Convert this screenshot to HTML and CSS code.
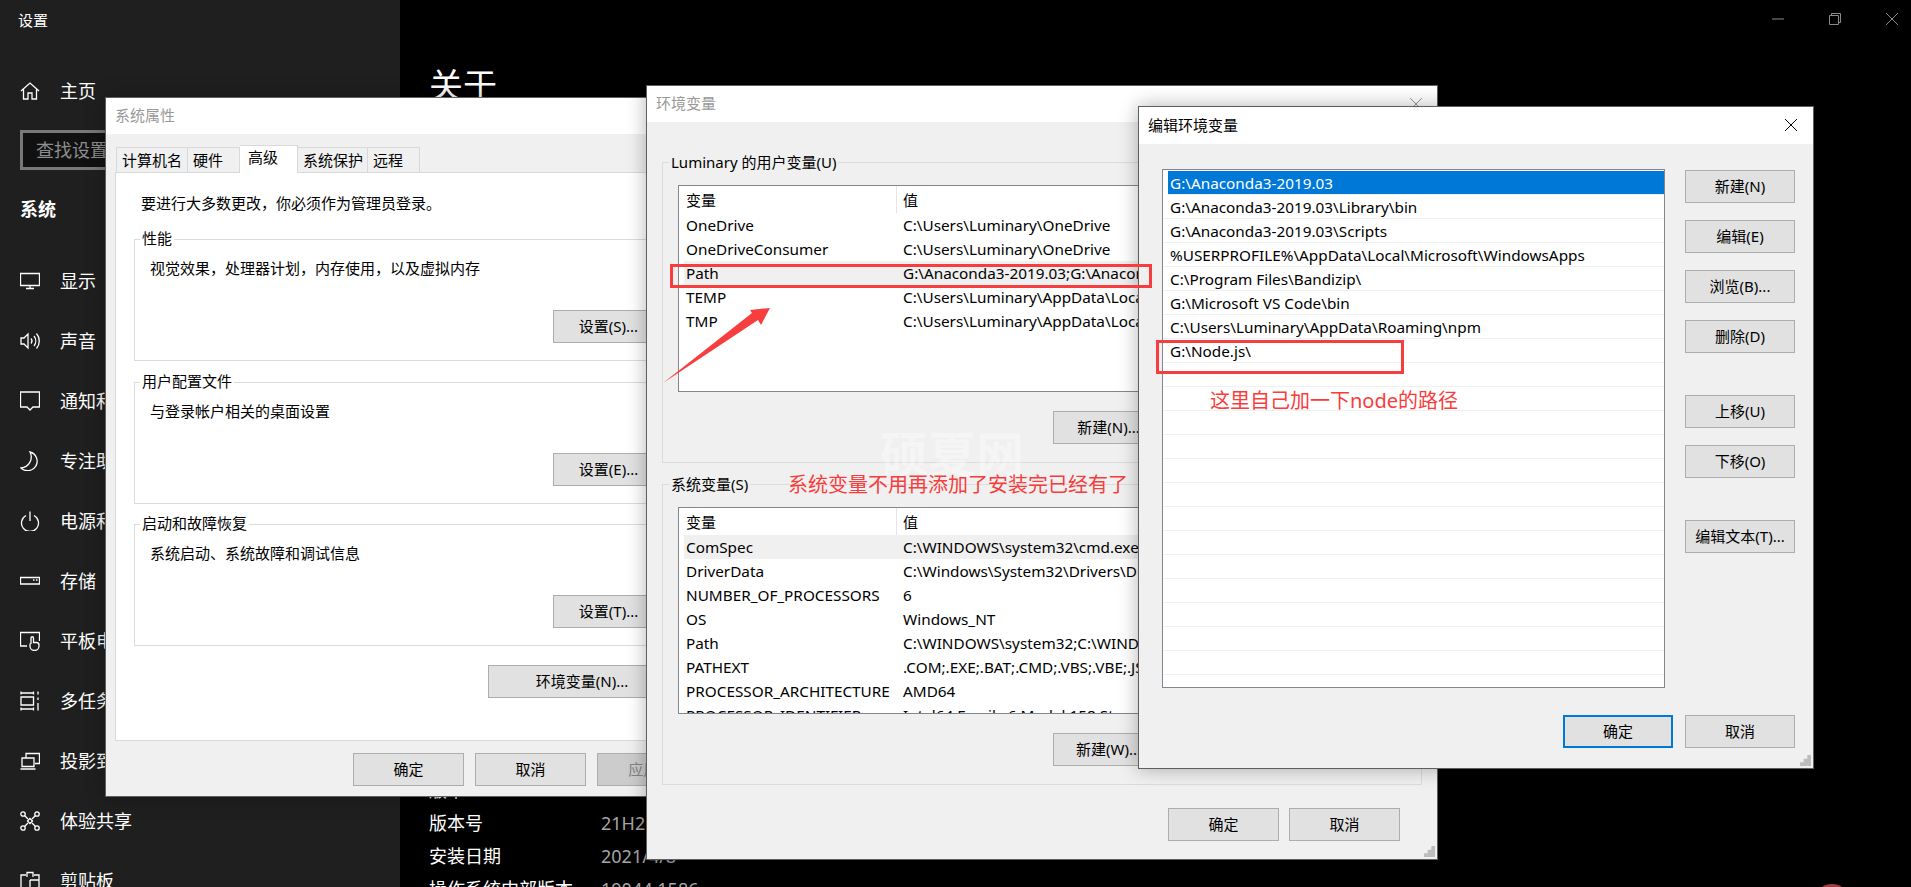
FILE: index.html
```html
<!DOCTYPE html>
<html lang="zh-CN">
<head>
    <meta charset="UTF-8">
    <title>设置</title>
    <link rel="stylesheet" href="styles.css">
</head>
<body>

<div class="settings">
    <div class="sidebar">
        <div class="app-title">设置</div>
        <div class="nav-item nav-home">
            <svg class="nav-icon" viewBox="0 0 20 20"><path d="M1 10L10 2L19 10M3.5 8V18H8V12H12V18H16.5V8"/></svg>
            <span>主页</span>
        </div>
        <div class="search-box">查找设置</div>
        <div class="nav-group">系统</div>
        <div class="nav-item">
            <svg class="nav-icon" viewBox="0 0 20 20"><path d="M.5 2.500H19.500V14.500H.5ZM10 14.500V17.500M6 17.500H14"/></svg>
            <span>显示</span>
        </div>
        <div class="nav-item">
            <svg class="nav-icon" viewBox="0 0 20 20"><path d="M1 7H4L8 3V17L4 13H1ZM11 7.500A4 4 0 0 1 11 12.500M14 5A8 8 0 0 1 14 15M16.500 2.500A11.500 11.500 0 0 1 16.500 17.500"/></svg>
            <span>声音</span>
        </div>
        <div class="nav-item">
            <svg class="nav-icon" viewBox="0 0 20 20"><path d="M.5 1H19.500V16H13L10 19L7 16H.5Z"/></svg>
            <span>通知和操作</span>
        </div>
        <div class="nav-item">
            <svg class="nav-icon" viewBox="0 0 20 20"><path d="M10 1A9.500 9.500 0 1 1 1 17A11 11 0 0 0 10 1Z"/></svg>
            <span>专注助手</span>
        </div>
        <div class="nav-item">
            <svg class="nav-icon" viewBox="0 0 20 20"><path d="M6 4.500A8.500 8.500 0 1 0 14 4.500M10 .5V10"/></svg>
            <span>电源和睡眠</span>
        </div>
        <div class="nav-item">
            <svg class="nav-icon" viewBox="0 0 20 20"><path d="M.5 6.500H19.500V13H.5ZM13 9H14.500M16 9H17.500"/></svg>
            <span>存储</span>
        </div>
        <div class="nav-item">
            <svg class="nav-icon" viewBox="0 0 20 20"><path d="M7 15H.5V1.500H19.500V10M11 13V7A1.200 1.200 0 0 1 13.500 7V11.500H16.500A2.500 2.500 0 0 1 19 14V15A4.500 4.500 0 0 1 10 15V12.500"/></svg>
            <span>平板电脑</span>
        </div>
        <div class="nav-item">
            <svg class="nav-icon" viewBox="0 0 20 20"><path d="M1 .5V3.500M13.500 .5V3.500M1 2H13.500M1 6H13.500V14H1ZM1 18H13.500M1 16.500V19.500M13.500 16.500V19.500M18 .5V3.500M18 6.500V9M18 12V19.500"/></svg>
            <span>多任务处理</span>
        </div>
        <div class="nav-item">
            <svg class="nav-icon" viewBox="0 0 20 20"><path d="M6 7V2.500H19.500V12.500H15M2 7H14V15.500H2ZM.5 18H15.500"/></svg>
            <span>投影到此电脑</span>
        </div>
        <div class="nav-item">
            <svg class="nav-icon" viewBox="0 0 20 20"><path d="M4.500 4.500L8 8M15.500 4.500L12 8M4.500 15.500L8 12M15.500 15.500L12 12M10 7.500L12.500 10L10 12.500L7.500 10Z"/><circle cx="3" cy="3" r="2.200"/><circle cx="17" cy="3" r="2.200"/><circle cx="3" cy="17" r="2.200"/><circle cx="17" cy="17" r="2.200"/></svg>
            <span>体验共享</span>
        </div>
        <div class="nav-item">
            <svg class="nav-icon" viewBox="0 0 20 20"><path d="M6 4H1V20H19V4H14M7 6V1.500H13V6M10 9H19M10 9V20"/></svg>
            <span>剪贴板</span>
        </div>
    </div>

    <div class="main">
        <h1 class="page-title">关于</h1>
        <div class="spec-list">
            <div class="spec-row"><span class="spec-key">版本</span><span class="spec-value">Windows 10 家庭版</span></div>
            <div class="spec-row"><span class="spec-key">版本号</span><span class="spec-value">21H2</span></div>
            <div class="spec-row"><span class="spec-key">安装日期</span><span class="spec-value">2021/4/8</span></div>
            <div class="spec-row"><span class="spec-key">操作系统内部版本</span><span class="spec-value">19044.1586</span></div>
        </div>
        <div class="window-controls">
            <div class="control"><svg viewBox="0 0 12 12"><path d="M0 6H12"/></svg></div>
            <div class="control"><svg viewBox="0 0 12 12"><path d="M.5 2.500H9.500V11.500H.5ZM2.500 2.500V.5H11.500V9.500H9.500"/></svg></div>
            <div class="control"><svg viewBox="0 0 12 12"><path d="M0 0L12 12M12 0L0 12"/></svg></div>
        </div>
    </div>
</div>

<!-- 系统属性 -->
<div class="window window-system">
    <div class="title-bar">系统属性</div>
    <div class="tabs">
        <div class="tab">计算机名</div>
        <div class="tab">硬件</div>
        <div class="tab active">高级</div>
        <div class="tab">系统保护</div>
        <div class="tab">远程</div>
    </div>
    <div class="tab-panel">
        <p class="admin-note">要进行大多数更改，你必须作为管理员登录。</p>
        <fieldset class="group">
            <legend>性能</legend>
            <p class="group-text">视觉效果，处理器计划，内存使用，以及虚拟内存</p>
            <button class="btn btn-end">设置(S)...</button>
        </fieldset>
        <fieldset class="group">
            <legend>用户配置文件</legend>
            <p class="group-text">与登录帐户相关的桌面设置</p>
            <button class="btn btn-end">设置(E)...</button>
        </fieldset>
        <fieldset class="group">
            <legend>启动和故障恢复</legend>
            <p class="group-text">系统启动、系统故障和调试信息</p>
            <button class="btn btn-end">设置(T)...</button>
        </fieldset>
        <div class="env-row"><button class="btn btn-env">环境变量(N)...</button></div>
    </div>
    <div class="dialog-buttons dialog-buttons-system">
        <button class="btn">确定</button>
        <button class="btn">取消</button>
        <button class="btn disabled">应用(A)</button>
    </div>
</div>

<!-- 环境变量 -->
<div class="window window-env">
    <div class="title-bar">
        环境变量
        <svg class="close-icon" viewBox="0 0 12 12"><path d="M0 0L12 12M12 0L0 12"/></svg>
    </div>
    <div class="env-body">
        <fieldset class="var-group">
            <legend>Luminary 的用户变量(U)</legend>
            <div class="var-list">
                <div class="var-head"><span class="var-name">变量</span><span class="var-value">值</span></div>
                <div class="var-row"><span class="var-name">OneDrive</span><span class="var-value">C:\Users\Luminary\OneDrive</span></div>
                <div class="var-row"><span class="var-name">OneDriveConsumer</span><span class="var-value">C:\Users\Luminary\OneDrive</span></div>
                <div class="var-row current"><span class="var-name">Path</span><span class="var-value">G:\Anaconda3-2019.03;G:\Anaconda3-2019.03\Library\bin</span></div>
                <div class="var-row"><span class="var-name">TEMP</span><span class="var-value">C:\Users\Luminary\AppData\Local\Temp</span></div>
                <div class="var-row"><span class="var-name">TMP</span><span class="var-value">C:\Users\Luminary\AppData\Local\Temp</span></div>
            </div>
            <div class="var-actions">
                <button class="btn">新建(N)...</button>
                <button class="btn">编辑(E)...</button>
                <button class="btn">删除(D)</button>
            </div>
        </fieldset>
        <fieldset class="var-group">
            <legend>系统变量(S)</legend>
            <div class="var-list">
                <div class="var-head"><span class="var-name">变量</span><span class="var-value">值</span></div>
                <div class="var-row current"><span class="var-name">ComSpec</span><span class="var-value">C:\WINDOWS\system32\cmd.exe</span></div>
                <div class="var-row"><span class="var-name">DriverData</span><span class="var-value">C:\Windows\System32\Drivers\DriverData</span></div>
                <div class="var-row"><span class="var-name">NUMBER_OF_PROCESSORS</span><span class="var-value">6</span></div>
                <div class="var-row"><span class="var-name">OS</span><span class="var-value">Windows_NT</span></div>
                <div class="var-row"><span class="var-name">Path</span><span class="var-value">C:\WINDOWS\system32;C:\WINDOWS;C:\WINDOWS\System32\Wbem</span></div>
                <div class="var-row"><span class="var-name">PATHEXT</span><span class="var-value">.COM;.EXE;.BAT;.CMD;.VBS;.VBE;.JS;.JSE</span></div>
                <div class="var-row"><span class="var-name">PROCESSOR_ARCHITECTURE</span><span class="var-value">AMD64</span></div>
                <div class="var-row"><span class="var-name">PROCESSOR_IDENTIFIER</span><span class="var-value">Intel64 Family 6 Model 158 Stepping 10</span></div>
            </div>
            <div class="var-actions">
                <button class="btn">新建(W)...</button>
                <button class="btn">编辑(I)...</button>
                <button class="btn">删除(L)</button>
            </div>
        </fieldset>
        <div class="dialog-buttons dialog-buttons-env">
            <button class="btn">确定</button>
            <button class="btn">取消</button>
        </div>
    </div>
    <svg class="grip" viewBox="0 0 12 12"><path d="M8 0H12V4H8ZM4 4H8V8H4ZM8 4H12V8H8ZM0 8H4V12H0ZM4 8H8V12H4ZM8 8H12V12H8Z"/></svg>
</div>

<div class="watermark">硕夏网</div>

<!-- 编辑环境变量 -->
<div class="window window-edit">
    <div class="title-bar">
        编辑环境变量
        <svg class="close-icon" viewBox="0 0 12 12"><path d="M0 0L12 12M12 0L0 12"/></svg>
    </div>
    <div class="edit-body">
        <div class="path-list">
            <div class="path-row selected">G:\Anaconda3-2019.03</div>
            <div class="path-row">G:\Anaconda3-2019.03\Library\bin</div>
            <div class="path-row">G:\Anaconda3-2019.03\Scripts</div>
            <div class="path-row">%USERPROFILE%\AppData\Local\Microsoft\WindowsApps</div>
            <div class="path-row">C:\Program Files\Bandizip\</div>
            <div class="path-row">G:\Microsoft VS Code\bin</div>
            <div class="path-row">C:\Users\Luminary\AppData\Roaming\npm</div>
            <div class="path-row">G:\Node.js\</div>
            <div class="path-row"></div>
            <div class="path-row"></div>
            <div class="path-row"></div>
            <div class="path-row"></div>
            <div class="path-row"></div>
            <div class="path-row"></div>
            <div class="path-row"></div>
            <div class="path-row"></div>
            <div class="path-row"></div>
            <div class="path-row"></div>
            <div class="path-row"></div>
            <div class="path-row"></div>
            <div class="path-row"></div>
        </div>
        <div class="edit-actions">
            <button class="btn">新建(N)</button>
            <button class="btn">编辑(E)</button>
            <button class="btn">浏览(B)...</button>
            <button class="btn">删除(D)</button>
            <button class="btn action-gap">上移(U)</button>
            <button class="btn">下移(O)</button>
            <button class="btn action-gap">编辑文本(T)...</button>
        </div>
    </div>
    <div class="dialog-buttons dialog-buttons-edit">
        <button class="btn btn-default">确定</button>
        <button class="btn">取消</button>
    </div>
    <svg class="grip" viewBox="0 0 12 12"><path d="M8 0H12V4H8ZM4 4H8V8H4ZM8 4H12V8H8ZM0 8H4V12H0ZM4 8H8V12H4ZM8 8H12V12H8Z"/></svg>
</div>

<!-- 红色标注 -->
<div class="mark mark-path"></div>
<div class="mark mark-node"></div>
<svg class="arrow" viewBox="0 0 120 90"><path d="M3 85L92 15L90 12L110 10L101 27L98 22Z"/></svg>
<div class="note note-system">系统变量不用再添加了安装完已经有了</div>
<div class="note note-node">这里自己加一下node的路径</div>

<div class="tray-dot"></div>

</body>
</html>
```

FILE: styles.css
```css
* {
    margin: 0;
    padding: 0;
    box-sizing: border-box;
}

body {
    width: 1911px;
    height: 887px;
    overflow: hidden;
    position: relative;
    background-color: #000;
    font-family: "Noto Sans", "Noto Sans CJK SC", sans-serif;
    font-size: 15px;
    line-height: 22px;
    color: #000;
}

/* settings app behind the dialogs */
.settings {
    display: flex;
    height: 100%;
}

.sidebar {
    width: 400px;
    flex: none;
    background-color: #1f1f1f;
    color: #fff;
    font-size: 18px;
    line-height: 24px;
    padding-top: 8px;
}

.app-title {
    font-size: 15px;
    padding-left: 18px;
    margin-bottom: 35px;
}

.nav-item {
    display: flex;
    align-items: center;
    height: 60px;
    padding-left: 20px;
    white-space: nowrap;
}

.nav-home {
    height: 48px;
}

.nav-icon {
    width: 20px;
    height: 20px;
    flex: none;
    margin-right: 20px;
    fill: none;
    stroke: #fff;
    stroke-width: 1.3;
}

.search-box {
    margin: 15px 20px 0;
    height: 40px;
    border: 3px solid #787878;
    background-color: #111;
    color: #8e8e8e;
    padding: 5px 13px;
}

.nav-group {
    font-weight: 700;
    padding-left: 20px;
    margin: 27px 0 30px;
}

.main {
    flex: 1;
    position: relative;
    color: #fff;
    padding: 60px 0 0 29px;
}

.page-title {
    font-size: 34px;
    font-weight: 400;
    line-height: 50px;
    margin-bottom: 664px;
}

.spec-row {
    display: flex;
    height: 33px;
    font-size: 18px;
    line-height: 33px;
    white-space: nowrap;
}

.spec-key {
    width: 172px;
}

.spec-value {
    color: #a6a6a6;
}

.window-controls {
    position: absolute;
    top: 0;
    right: -9px;
    display: flex;
}

.control {
    width: 57px;
    height: 38px;
    display: flex;
    align-items: center;
    justify-content: center;
}

.control svg {
    width: 12px;
    height: 12px;
    fill: none;
    stroke: #8a8a8a;
}

/* dialogs sit on the desktop at their own place */
.window {
    position: absolute;
    background-color: #f0f0f0;
    border: 1px solid #5f5f5f;
    box-shadow: 0 0 18px rgba(0, 0, 0, 0.3);
}

.window-system {
    left: 105px;
    top: 97px;
    width: 620px;
    height: 700px;
}

.window-env {
    left: 646px;
    top: 85px;
    width: 792px;
    height: 775px;
}

.window-edit {
    left: 1138px;
    top: 106px;
    width: 676px;
    height: 663px;
}

.title-bar {
    position: relative;
    height: 36px;
    background-color: #fff;
    color: #999;
    line-height: 34px;
    padding-left: 9px;
}

.window-edit .title-bar {
    height: 37px;
    line-height: 37px;
    color: #000;
}

.close-icon {
    position: absolute;
    top: 12px;
    right: 15px;
    width: 12px;
    height: 12px;
    fill: none;
    stroke: #999;
}

.window-edit .close-icon {
    stroke: #000;
    right: 16px;
}

.grip {
    position: absolute;
    right: 2px;
    bottom: 2px;
    width: 11px;
    height: 11px;
    fill: #bdbdbd;
}

.btn {
    display: block;
    width: 111px;
    height: 33px;
    flex: none;
    padding-bottom: 2px;
    background-color: #e1e1e1;
    border: 1px solid #adadad;
    font: inherit;
    color: #000;
}

.btn.disabled {
    background-color: #ccc;
    color: #838383;
}

.btn-default {
    border: 2px solid #0078d7;
}

.dialog-buttons {
    display: flex;
}

/* system properties */
.tabs {
    display: flex;
    align-items: flex-end;
    height: 38px;
    padding-left: 10px;
}

.tab {
    height: 25px;
    padding-left: 5px;
    line-height: 25px;
    background-color: #f0f0f0;
    border: 1px solid #d9d9d9;
    border-bottom: 0;
    border-left: 0;
    white-space: nowrap;
}

.tab:nth-child(1) { width: 72px; border-left: 1px solid #d9d9d9; }
.tab:nth-child(2) { width: 52px; }
.tab:nth-child(3) { width: 58px; }
.tab:nth-child(4) { width: 70px; }
.tab:nth-child(5) { width: 52px; }

.tab.active {
    position: relative;
    height: 28px;
    margin-bottom: -1px;
    padding-left: 8px;
    line-height: 23px;
    background-color: #fff;
}

.tab-panel {
    margin-left: 9px;
    height: 569px;
    background-color: #fff;
    border: 1px solid #d9d9d9;
    padding: 19px 0 0 18px;
}

.admin-note {
    padding-left: 7px;
    margin-bottom: 14px;
}

.group {
    width: 546px;
    height: 133px;
    margin-bottom: 10px;
    border: 1px solid #dcdcdc;
    padding: 7px 15px 0;
}

.group + .group + .group {
    margin-top: -1px;
}

.group legend {
    margin-left: -10px;
    padding: 0 2px 2px;
    line-height: 20px;
}

.var-group legend {
    margin-left: -9px;
    padding: 0 2px;
}

.group-text {
    margin-bottom: 31px;
}

.btn-end {
    margin-left: auto;
}

.env-row {
    width: 542px;
    padding-top: 9px;
}

.btn-env {
    width: 188px;
    margin-left: auto;
}

.dialog-buttons-system {
    gap: 11px;
    padding: 12px 0 0 247px;
}

/* environment variables */
.env-body {
    padding-left: 15px;
    position: relative;
}

.var-group {
    width: 760px;
    height: 312px;
    margin-bottom: 10px;
    border: 1px solid #dcdcdc;
    padding: 12px 15px 0;
}

.var-group:first-child {
    margin-top: 29px;
}

.var-list {
    height: 207px;
    overflow: hidden;
    background-color: #fff;
    border: 1px solid #82878f;
}

.var-head,
.var-row {
    display: flex;
    white-space: nowrap;
    margin-left: 5px;
    padding-left: 2px;
}

.var-head {
    height: 27px;
    line-height: 28px;
}

.var-row {
    height: 24px;
    font-size: 15.3px;
    line-height: 24px;
}

.var-row.current {
    background-color: #f0f0f0;
}

.var-name {
    width: 210px;
    flex: none;
}

.var-value {
    padding-left: 7px;
}

.var-head .var-value {
    border-left: 1px solid #e5e5e5;
    padding-left: 6px;
}

.var-actions {
    display: flex;
    justify-content: flex-end;
    gap: 10px;
    margin-top: 19px;
}

.dialog-buttons-env {
    width: 738px;
    justify-content: flex-end;
    gap: 10px;
    padding-top: 13px;
}

/* edit dialog */
.edit-body {
    display: flex;
    padding: 25px 0 0 23px;
}

.path-list {
    width: 503px;
    height: 519px;
    overflow: hidden;
    background-color: #fff;
    border: 1px solid #82878f;
    padding-top: 1px;
    margin-right: 20px;
}

.path-row {
    height: 24px;
    padding-left: 7px;
    font-size: 15.3px;
    line-height: 24px;
    border-bottom: 1px solid #f0f0f0;
    white-space: nowrap;
}

.path-row.selected {
    margin-left: 5px;
    padding-left: 2px;
    background-color: #0078d7;
    color: #fff;
}

.edit-actions {
    display: flex;
    flex-direction: column;
    gap: 17px;
    padding-top: 1px;
}

.edit-actions .btn {
    width: 110px;
}

.edit-actions .action-gap {
    margin-top: 25px;
}

.dialog-buttons-edit {
    justify-content: flex-end;
    gap: 12px;
    padding: 27px 18px 0 0;
}

.dialog-buttons-edit .btn {
    width: 110px;
}

/* annotations painted on top of the screenshot */
.mark {
    position: absolute;
    border: 3px solid #f73d3d;
}

.mark-path {
    left: 670px;
    top: 264px;
    width: 482px;
    height: 24px;
}

.mark-node {
    left: 1156px;
    top: 340px;
    width: 248px;
    height: 34px;
}

.arrow {
    position: absolute;
    left: 660px;
    top: 298px;
    width: 120px;
    height: 90px;
    fill: #f73d3d;
}

.note {
    position: absolute;
    font-size: 20px;
    line-height: 28px;
    color: #f73d3d;
    white-space: nowrap;
}

.note-system {
    left: 788px;
    top: 471px;
}

.note-node {
    left: 1210px;
    top: 387px;
}

.watermark {
    position: absolute;
    left: 880px;
    top: 424px;
    font-size: 48px;
    line-height: 60px;
    font-weight: 700;
    color: rgba(255, 255, 255, 0.35);
    white-space: nowrap;
}

.tray-dot {
    position: absolute;
    left: 1814px;
    top: 884px;
    width: 36px;
    height: 36px;
    border-radius: 50%;
    background-color: #a33c3c;
}
```
